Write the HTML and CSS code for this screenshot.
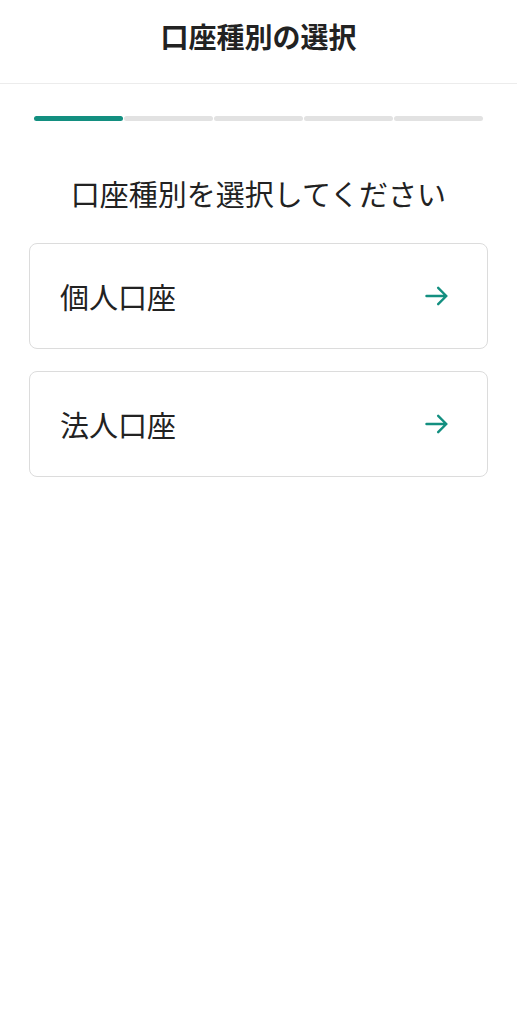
FILE: index.html
```html
<!DOCTYPE html>
<html lang="ja">
<head>
    <meta charset="UTF-8">
    <meta name="viewport" content="width=device-width, initial-scale=1.0">
    <title>口座種別の選択</title>
    <link rel="stylesheet" href="styles.css">
</head>
<body>
    <header class="top-bar">
        <h1>口座種別の選択</h1>
    </header>

    <div class="steps">
        <span class="step active"></span>
        <span class="step"></span>
        <span class="step"></span>
        <span class="step"></span>
        <span class="step"></span>
    </div>

    <h2 class="lead">口座種別を選択してください</h2>

    <div class="options">
        <a class="option" href="#">
            <span>個人口座</span>
            <svg class="arrow" width="28" height="28" viewBox="0 0 24 24" fill="none" stroke="currentColor" stroke-width="2.1" stroke-linecap="round" stroke-linejoin="round">
                <path d="M3 12h17M13 5l7 7-7 7"/>
            </svg>
        </a>
        <a class="option" href="#">
            <span>法人口座</span>
            <svg class="arrow" width="28" height="28" viewBox="0 0 24 24" fill="none" stroke="currentColor" stroke-width="2.1" stroke-linecap="round" stroke-linejoin="round">
                <path d="M3 12h17M13 5l7 7-7 7"/>
            </svg>
        </a>
    </div>
</body>
</html>
```

FILE: styles.css
```css
body {
    margin: 0;
    background-color: #fff;
    color: #222;
    font-family: "Noto Sans CJK JP", "Noto Sans", sans-serif;
}
.top-bar {
    padding: 16px 0 27px;
    border-bottom: 1px solid #ececec;
    text-align: center;
}
.top-bar h1 {
    margin: 0;
    font-size: 28px;
    line-height: 40px;
    font-weight: bold;
}
.steps {
    display: flex;
    gap: 1px;
    margin: 32px 34px 0;
}
.step {
    flex: 1;
    height: 5px;
    border-radius: 3px;
    background-color: #e2e2e2;
}
.step.active {
    background-color: #138f80;
}
.lead {
    margin: 52px 0 30px;
    font-size: 29px;
    line-height: 40px;
    font-weight: normal;
    text-align: center;
}
.options {
    display: flex;
    flex-direction: column;
    gap: 22px;
    margin: 0 29px;
}
.option {
    display: flex;
    align-items: center;
    justify-content: space-between;
    padding: 32px 36px 32px 30px;
    border: 1px solid #dcdcdc;
    border-radius: 8px;
    color: #222;
    text-decoration: none;
    font-size: 29px;
    line-height: 40px;
}
.arrow {
    color: #138f80;
}
```
